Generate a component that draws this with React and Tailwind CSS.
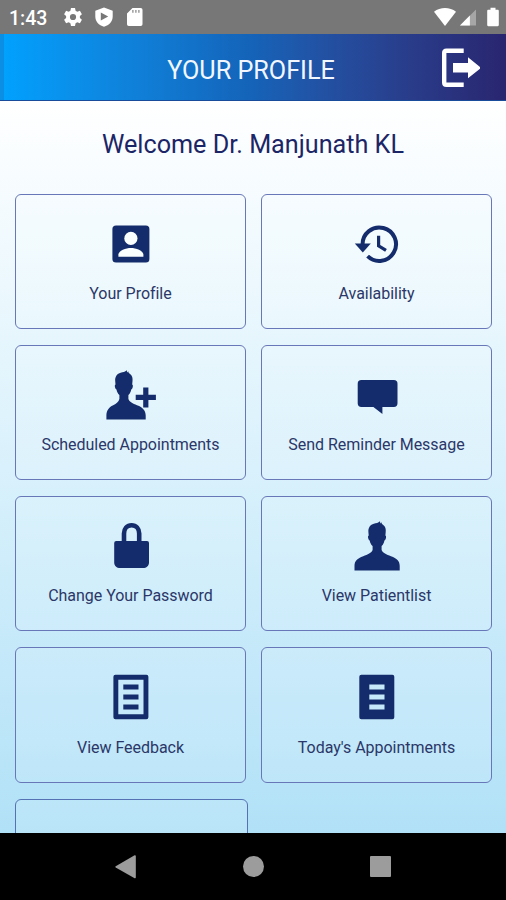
const NAVY = "#142c6b";

// ─────────────────────────────────────────────────────────────────────────────
// Tile icons, all drawn on the same 60x60 box
// ─────────────────────────────────────────────────────────────────────────────
function TileIcon({ children }) {
    return (
        <svg viewBox="0 0 60 60" className="w-[60px] h-[60px] shrink-0" fill={NAVY}>
            {children}
        </svg>
    );
}

function ProfileIcon() {
    return (
        <TileIcon>
            <rect x="11.4" y="11.4" width="37" height="37.2" rx="3.6" />
            <circle cx="29.9" cy="24.4" r="6.6" fill="#fafeff" />
            <path d="M17.4 42.8v-2.2c0-4.2 7.6-6.7 12.5-6.7s12.5 2.5 12.5 6.7v2.2z" fill="#fafeff" />
        </TileIcon>
    );
}

function HistoryIcon() {
    return (
        <TileIcon>
            <path d="M15.6 30.5a16.7 16.7 0 1 1 5 11.6" fill="none" stroke={NAVY} strokeWidth="4" />
            <path d="M7.8 29.6h16l-8 8.8z" />
            <path d="M31.6 21.8v10l7.4 4.6" fill="none" stroke={NAVY} strokeWidth="3.2" />
        </TileIcon>
    );
}

function PersonAddIcon() {
    return (
        <TileIcon>
            <path d="M25.8 5.2L26.1 7.4 27.2 6.2C27.4 7.4 27.8 8 28.8 8.7 31.4 10.5 31.8 13 31.5 16L31.2 19.5C32 19.8 32 21 31.7 22.2 31.4 23.4 30.9 24.2 30.2 24.4 29.8 26.8 29 28.4 27.4 30V34C28.4 37 31.8 38.6 36 40.2 42 42.4 44.7 45.6 44.7 50.5V54.4H5.4V50.5C5.4 45.6 7.6 42.4 12.2 40.2 15.5 38.6 17.6 37 18.4 34V30C16.8 28.4 15.9 26.8 15.5 24.4 14.8 24.2 14.3 23.4 14 22.2 13.7 21 13.7 19.8 14.5 19.5L14.2 16C13.9 11.5 16.2 8.8 19.6 7.8 22 7.1 24 6.8 25.8 5.2z" />
            <path d="M42.2 22.4h5.2v7.4h7.5v5.1h-7.5v7.5h-5.2v-7.5h-7.5v-5.1h7.5z" />
        </TileIcon>
    );
}

function PersonIcon() {
    return (
        <TileIcon>
            <path d="M33 5.2L33.3 7.4 34.4 6.2C34.6 7.4 35 8 36 8.7 38.6 10.5 39 13 38.7 16L38.4 19.5C39.2 19.8 39.2 21 38.9 22.2 38.6 23.4 38.1 24.2 37.4 24.4 37 26.8 36.2 28.4 34.6 30V34C35.6 37 39.5 38.6 44 40.2 49.8 42.2 52.7 45 52.7 49.8V54.5H7.5V49.8C7.5 45 10.4 42.2 16.2 40.2 20.7 38.6 24.6 37 25.6 34V30C24 28.4 23.1 26.8 22.7 24.4 22 24.2 21.5 23.4 21.2 22.2 20.9 21 20.9 19.8 21.7 19.5L21.4 16C21.1 11.5 23.4 8.8 26.8 7.8 29.2 7.1 31.2 6.8 33 5.2z" />
        </TileIcon>
    );
}

function MessageIcon() {
    return (
        <TileIcon>
            <path d="M14.4 15h32.4a3.7 3.7 0 0 1 3.7 3.7v19.6a3.7 3.7 0 0 1-3.7 3.7H35.4v7L26.4 42h-12a3.7 3.7 0 0 1-3.7-3.7V18.7a3.7 3.7 0 0 1 3.7-3.7z" />
        </TileIcon>
    );
}

function LockIcon() {
    return (
        <TileIcon>
            <path d="M23 27V17.5c0-5 3.1-8.3 7.6-8.3s7.6 3.3 7.6 8.3V27" fill="none" stroke={NAVY} strokeWidth="4.6" />
            <path d="M15.2 25.1h30.8a2 2 0 0 1 2 2v19.4c0 3.500-2.500 5.500-6 5.500H19.2c-3.500 0-6-2-6-5.500V27.1a2 2 0 0 1 2-2z" />
        </TileIcon>
    );
}

function FeedbackIcon() {
    return (
        <TileIcon>
            <path fillRule="evenodd" d="M14.4 7.7h31a2 2 0 0 1 2 2v40.5a2 2 0 0 1-2 2h-31a2 2 0 0 1-2-2V9.7a2 2 0 0 1 2-2zM17.3 12.7v34.5h25.2V12.7z" />
            <path d="M22.3 17.6h15.2v5H22.3zM22.3 27.5h15.2v5H22.3zM22.3 37.4h15.2v5H22.3z" />
        </TileIcon>
    );
}

function ListIcon() {
    return (
        <TileIcon>
            <path fillRule="evenodd" d="M14.3 7.7h31a2 2 0 0 1 2 2v40.5a2 2 0 0 1-2 2h-31a2 2 0 0 1-2-2V9.7a2 2 0 0 1 2-2zM22.3 17.4v5.2h15.2v-5.2zM22.3 27.4v5.2h15.2v-5.2zM22.3 37.4v5.2h15.2v-5.2z" />
        </TileIcon>
    );
}

const TILES = [
    { label: "Your Profile", icon: ProfileIcon },
    { label: "Availability", icon: HistoryIcon },
    { label: "Scheduled Appointments", icon: PersonAddIcon },
    { label: "Send Reminder Message", icon: MessageIcon },
    { label: "Change Your Password", icon: LockIcon },
    { label: "View Patientlist", icon: PersonIcon },
    { label: "View Feedback", icon: FeedbackIcon },
    { label: "Today's Appointments", icon: ListIcon },
];

function Tile({ label, icon: Icon }) {
    return (
        <button className="h-[135.2px] flex flex-col items-center pt-[19px] rounded-[6px] border-[1.5px] border-[#6877b8] bg-white/10">
            <Icon />
            <span className="mt-[8.3px] text-[16px] leading-6 tracking-[-0.03px] text-[#2b3768] whitespace-nowrap">{label}</span>
        </button>
    );
}

// ─────────────────────────────────────────────────────────────────────────────
// System bars
// ─────────────────────────────────────────────────────────────────────────────
function StatusBar() {
    return (
        <div className="h-[34px] shrink-0 flex items-center justify-between bg-[#777777] pl-[9px] pr-[7.5px] text-white">
            <div className="flex items-center">
                <span className="w-[54px] pt-[3px] text-[19.5px] leading-6 font-medium">1:43</span>
                <svg viewBox="0 0 20 20" className="w-[20px] h-[20px]" fill="#fff">
                    <path fillRule="evenodd" d="M8 1h4l.6 2.7 1.7 1 2.6-.9 2 3.5-2 1.8v1.8l2 1.8-2 3.5-2.6-.9-1.7 1L12 19H8l-.6-2.7-1.7-1-2.6.9-2-3.5 2-1.8V9.1l-2-1.8 2-3.5 2.6.9 1.7-1zM10 6.9a3.1 3.1 0 1 0 0 6.2 3.1 3.1 0 0 0 0-6.2z" />
                </svg>
                <svg viewBox="0 0 20 20" className="ml-[11px] w-[20px] h-[20px]" fill="#fff">
                    <path fillRule="evenodd" d="M10 .4l8.7 3.4v5.7c0 5-3.5 8.7-8.7 10.3C4.8 18.2 1.3 14.5 1.3 9.5V3.8zM6.8 5.500v8l7.4-4z" />
                </svg>
                <svg viewBox="0 0 20 20" className="ml-[11px] w-[20px] h-[20px]" fill="#fff">
                    <path d="M7.5 1h8.200A1.800 1.800 0 0 1 17.500 2.800v14.400a1.800 1.800 0 0 1-1.800 1.800H3.800a1.800 1.800 0 0 1-1.800-1.800V6.500z" />
                    <path d="M7 3v2.800h1.700V3zM10 3v2.800h1.700V3zM13 3v2.800h1.700V3z" fill="#a8a8a8" />
                </svg>
            </div>
            <div className="flex items-center">
                <svg viewBox="0 0 22 20" className="w-[22px] h-[20px]" fill="#fff">
                    <path d="M0 4.8C6.3-.2 15.7-.2 22 4.8L11 19z" />
                </svg>
                <svg viewBox="0 0 18 18" className="ml-[3px] w-[17px] h-[18px]" fill="#fff">
                    <path d="M18 1v17H1z" fillOpacity=".35" />
                    <path d="M11.5 7.5V18H1z" />
                </svg>
                <svg viewBox="0 0 12 20" className="ml-[11px] w-[12px] h-[20px]" fill="#fff">
                    <path d="M3.5.8h5v2h2.2c.6 0 1.1.5 1.1 1.1v14.2c0 .6-.5 1.1-1.1 1.1H1.3c-.6 0-1.1-.5-1.1-1.1V3.9c0-.6.5-1.1 1.1-1.1h2.2z" />
                </svg>
            </div>
        </div>
    );
}

function NavBar() {
    return (
        <div className="h-[67px] shrink-0 flex items-center justify-between bg-black pl-[115px] pr-[115px]">
            <svg viewBox="0 0 22 24" className="w-[22px] h-[24px]" fill="#9c9c9c">
                <path d="M.7 11.2L19.2.5c.9-.5 1.6 0 1.6.9v20.8c0 .9-.7 1.4-1.6.9L.7 12.4c-.5-.3-.5-.9 0-1.2z" />
            </svg>
            <div className="w-[21px] h-[21px] rounded-full bg-[#9c9c9c]" />
            <div className="w-[21px] h-[21px] rounded-[1px] bg-[#9c9c9c]" />
        </div>
    );
}

function Header() {
    return (
        <header className="h-[66.5px] shrink-0 grid grid-cols-[1fr_auto_1fr] items-center border-b border-[#1a4c9c] bg-linear-to-r from-[#00a2ff] via-[#1463b8] to-[#29256f]">
            <div className="h-full w-[4px] bg-[#0b8fe4]" />
            <h1 className="pt-[8px] pr-[4px] text-[25.2px] leading-[30px] text-[#f2f7ff] whitespace-nowrap">YOUR PROFILE</h1>
            <button className="justify-self-end mr-[26px]">
                <svg viewBox="0 0 40 40" className="block w-[40px] h-[40px]" fill="#fff">
                    <path d="M23.7 3.7H6.5c-1.5 0-2.300.8-2.300 2.300v29.400c0 1.500.8 2.300 2.300 2.300h17.200" fill="none" stroke="#fff" strokeWidth="4.400" />
                    <path d="M13 16.100h15V10.300l13 10.600-13 10.400v-5.900H13z" />
                </svg>
            </button>
        </header>
    );
}

export default function App() {
    return (
        <div className="w-[506px] h-[900px] flex flex-col overflow-hidden font-['Roboto',sans-serif]">
            <StatusBar />
            <Header />
            <main className="flex-1 min-h-0 overflow-hidden bg-linear-to-b from-white via-[#d9f1fc] to-[#b1e1f7]">
                <h2 className="pt-[28.5px] h-[93px] text-center text-[25.2px] leading-8 text-[#1c2566]">
                    Welcome Dr. Manjunath KL
                </h2>
                <div className="grid grid-cols-[231px_231px] gap-x-[15px] gap-y-[16.1px] pl-[15px]">
                    {TILES.map((t) => (
                        <Tile key={t.label} {...t} />
                    ))}
                    {/* Next tile, still below the fold */}
                    <div className="w-[233px] h-[135px] rounded-[6px] border-[1.5px] border-[#5573b4] bg-white/10" />
                </div>
            </main>
            <NavBar />
        </div>
    );
}
